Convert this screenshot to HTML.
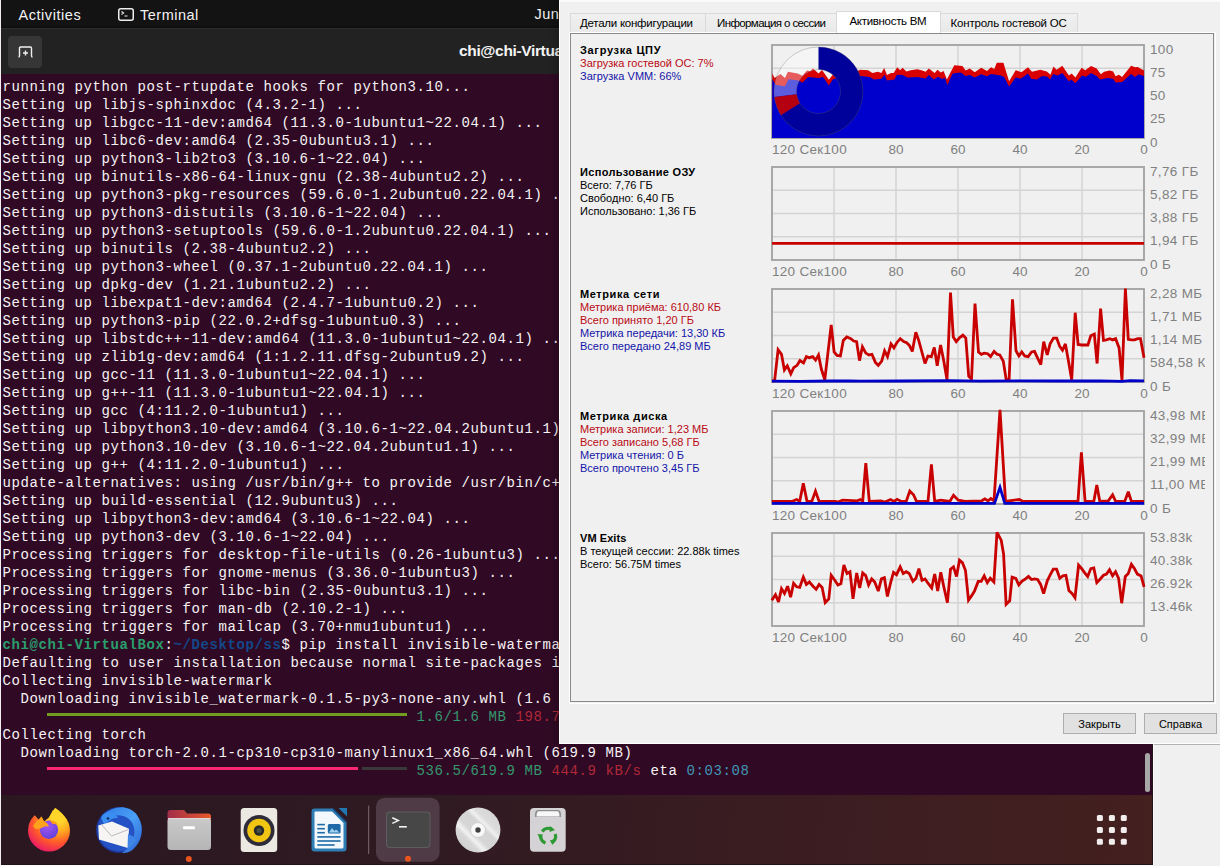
<!DOCTYPE html><html><head><meta charset="utf-8"><style>
*{margin:0;padding:0;box-sizing:border-box}
html,body{width:1220px;height:866px;overflow:hidden;background:#f0f0f0;font-family:"Liberation Sans",sans-serif}
#scr{position:absolute;left:0;top:0;width:1153px;height:865px;background:#300a24;overflow:hidden}
#lb{position:absolute;left:0;top:0;width:1px;height:865px;background:#f4eef2;z-index:5}
#topbar{position:absolute;left:0;top:0;width:1153px;height:28px;background:#131313;border-bottom:2px solid #0f0f0f;color:#f2f2f2;font-size:14.5px}
#hdr{position:absolute;left:0;top:28px;width:1153px;height:46px;background:#222222;border-top:1px solid #2d2d2d}
#term{position:absolute;left:0;top:74px;padding-top:4px;width:1153px;height:721px;background:#300a24;font-family:"Liberation Mono",monospace;font-size:14px;letter-spacing:0.6px;color:#f6f2f4}
.tl{position:relative;height:18px;line-height:18px;white-space:pre;padding-left:2.4px}
.pg{color:#2a9e6c;font-weight:bold}
.pb{color:#12488b;font-weight:bold}
.cg{color:#35986f}.cr{color:#b02838}.cc{color:#4096b6}
.bar{display:inline-block;position:relative;width:360px;height:18px;vertical-align:top}
.bar i{position:absolute;top:5px;height:3px}
.bg1{background:#729c1f}.bp{background:#f92672}.bk{background:#3a3a3a}
#dock{position:absolute;left:0;top:795px;width:1153px;height:70px;background:linear-gradient(95deg,#2a1720 0%,#2f1a22 35%,#3b1d21 70%,#44201f 100%)}
#dlg{position:absolute;left:559px;top:0;width:661px;height:744px;background:#f0f0f0;border-left:1px solid #fff;border-top:2px solid #fafafa;border-bottom:1px solid #fff}
.abs{position:absolute}
.tab{position:absolute;top:13px;height:20px;border:1px solid #d9d9d9;border-bottom:none;background:linear-gradient(#f0f0f0,#e9e9e9);font-size:11.5px;color:#000;line-height:18px;white-space:nowrap}
.lbl{position:absolute;left:580px;font-size:11px;line-height:13px;white-space:nowrap}
.lbl b{font-size:11px}
.red{color:#b90a14}.blue{color:#1414a8}
.ax{position:absolute;font-size:13.5px;color:#808080;white-space:nowrap;line-height:13px}
.btn{position:absolute;top:713px;height:21px;width:73px;border:1px solid #adadad;background:#e1e1e1;font-size:11px;text-align:center;line-height:21px;color:#000}
</style></head><body>
<div id="scr">
<div id="topbar"><span class="abs" style="left:18.5px;top:6.5px;letter-spacing:0.55px">Activities</span><svg class="abs" style="left:118px;top:7.5px" width="16" height="13" viewBox="0 0 16 13"><rect x="0.75" y="0.75" width="14.5" height="11.5" rx="2" fill="none" stroke="#eee" stroke-width="1.5"/><path d="M3.5 3.5l2 1.5-2 1.5M6.5 8h3" stroke="#eee" stroke-width="1.2" fill="none"/></svg><span class="abs" style="left:140px;top:6.5px;letter-spacing:0.5px">Terminal</span><span class="abs" style="left:534.5px;top:6px;letter-spacing:0.5px">Jun</span></div>
<div id="hdr"><div class="abs" style="left:8px;top:7px;width:34px;height:32px;border-radius:4px;background:#363636"></div><svg class="abs" style="left:17px;top:17px" width="17" height="12" viewBox="0 0 17 12"><path d="M1.5 11 Q2.5 11 2.5 9.5 V2 Q2.5 1 3.5 1 H13.5 Q14.5 1 14.5 2 V9.5 Q14.5 11 15.5 11" fill="none" stroke="#f0f0f0" stroke-width="1.4"/><path d="M8.5 4.5v5M6 7h5" stroke="#f0f0f0" stroke-width="1.4"/></svg><span class="abs" style="left:459px;top:12.5px;font-weight:bold;font-size:15.5px;letter-spacing:-0.35px;color:#f4f4f4">chi@chi-VirtualBox: ~/Desktop/ss</span></div>
<div id="term"><div class="tl">running python post-rtupdate hooks for python3.10...</div>
<div class="tl">Setting up libjs-sphinxdoc (4.3.2-1) ...</div>
<div class="tl">Setting up libgcc-11-dev:amd64 (11.3.0-1ubuntu1~22.04.1) ...</div>
<div class="tl">Setting up libc6-dev:amd64 (2.35-0ubuntu3.1) ...</div>
<div class="tl">Setting up python3-lib2to3 (3.10.6-1~22.04) ...</div>
<div class="tl">Setting up binutils-x86-64-linux-gnu (2.38-4ubuntu2.2) ...</div>
<div class="tl">Setting up python3-pkg-resources (59.6.0-1.2ubuntu0.22.04.1) ...</div>
<div class="tl">Setting up python3-distutils (3.10.6-1~22.04) ...</div>
<div class="tl">Setting up python3-setuptools (59.6.0-1.2ubuntu0.22.04.1) ...</div>
<div class="tl">Setting up binutils (2.38-4ubuntu2.2) ...</div>
<div class="tl">Setting up python3-wheel (0.37.1-2ubuntu0.22.04.1) ...</div>
<div class="tl">Setting up dpkg-dev (1.21.1ubuntu2.2) ...</div>
<div class="tl">Setting up libexpat1-dev:amd64 (2.4.7-1ubuntu0.2) ...</div>
<div class="tl">Setting up python3-pip (22.0.2+dfsg-1ubuntu0.3) ...</div>
<div class="tl">Setting up libstdc++-11-dev:amd64 (11.3.0-1ubuntu1~22.04.1) ...</div>
<div class="tl">Setting up zlib1g-dev:amd64 (1:1.2.11.dfsg-2ubuntu9.2) ...</div>
<div class="tl">Setting up gcc-11 (11.3.0-1ubuntu1~22.04.1) ...</div>
<div class="tl">Setting up g++-11 (11.3.0-1ubuntu1~22.04.1) ...</div>
<div class="tl">Setting up gcc (4:11.2.0-1ubuntu1) ...</div>
<div class="tl">Setting up libpython3.10-dev:amd64 (3.10.6-1~22.04.2ubuntu1.1) ...</div>
<div class="tl">Setting up python3.10-dev (3.10.6-1~22.04.2ubuntu1.1) ...</div>
<div class="tl">Setting up g++ (4:11.2.0-1ubuntu1) ...</div>
<div class="tl">update-alternatives: using /usr/bin/g++ to provide /usr/bin/c++ (c++) in auto mode</div>
<div class="tl">Setting up build-essential (12.9ubuntu3) ...</div>
<div class="tl">Setting up libpython3-dev:amd64 (3.10.6-1~22.04) ...</div>
<div class="tl">Setting up python3-dev (3.10.6-1~22.04) ...</div>
<div class="tl">Processing triggers for desktop-file-utils (0.26-1ubuntu3) ...</div>
<div class="tl">Processing triggers for gnome-menus (3.36.0-1ubuntu3) ...</div>
<div class="tl">Processing triggers for libc-bin (2.35-0ubuntu3.1) ...</div>
<div class="tl">Processing triggers for man-db (2.10.2-1) ...</div>
<div class="tl">Processing triggers for mailcap (3.70+nmu1ubuntu1) ...</div>
<div class="tl"><b class="pg">chi@chi-VirtualBox</b>:<b class="pb">~/Desktop/ss</b>$ pip install invisible-watermark</div>
<div class="tl">Defaulting to user installation because normal site-packages is not writeable</div>
<div class="tl">Collecting invisible-watermark</div>
<div class="tl">  Downloading invisible_watermark-0.1.5-py3-none-any.whl (1.6 MB)</div>
<div class="tl">     <span class="bar"><i class="bg1" style="left:0;width:360px"></i></span> <span class="cg">1.6/1.6 MB</span> <span class="cr">198.7 kB/s</span> eta <span class="cc">0:00:00</span></div>
<div class="tl">Collecting torch</div>
<div class="tl">  Downloading torch-2.0.1-cp310-cp310-manylinux1_x86_64.whl (619.9 MB)</div>
<div class="tl">     <span class="bar"><i class="bp" style="left:0;width:311px"></i><i class="bk" style="left:314.5px;width:45.5px"></i></span> <span class="cg">536.5/619.9 MB</span> <span class="cr">444.9 kB/s</span> eta <span class="cc">0:03:08</span></div><div class="abs" style="left:1144.5px;top:678.7px;width:5px;height:39px;border-radius:3px;background:#a7a7a7"></div></div>
<div id="dock"><svg class="abs" style="left:0;top:0" width="1153" height="70" viewBox="0 795 1153 70">
<defs>
<radialGradient id="ffg" cx="0.7" cy="0.2" r="0.9"><stop offset="0" stop-color="#ffe83a"/><stop offset="0.35" stop-color="#ffb21e"/><stop offset="0.65" stop-color="#ff5a2a"/><stop offset="1" stop-color="#e8116e"/></radialGradient>
<radialGradient id="ffp" cx="0.4" cy="0.3" r="0.8"><stop offset="0" stop-color="#a455f0"/><stop offset="1" stop-color="#5b3fd8"/></radialGradient>
<linearGradient id="tbg" x1="0" y1="0" x2="1" y2="1"><stop offset="0" stop-color="#1d86e8"/><stop offset="0.5" stop-color="#2a6ad8"/><stop offset="1" stop-color="#1b3f9a"/></linearGradient>
<linearGradient id="fldt" x1="0" y1="0" x2="1" y2="0"><stop offset="0" stop-color="#a12d48"/><stop offset="1" stop-color="#e85a2c"/></linearGradient>
<linearGradient id="fldf" x1="0" y1="0" x2="0" y2="1"><stop offset="0" stop-color="#c9c9c9"/><stop offset="1" stop-color="#b5b5b5"/></linearGradient>
<linearGradient id="cdg" x1="1" y1="0" x2="0" y2="1"><stop offset="0" stop-color="#d0d0d0"/><stop offset="0.3" stop-color="#dcdcdc"/><stop offset="0.36" stop-color="#f0f0f0"/><stop offset="0.42" stop-color="#d4d4d4"/><stop offset="0.58" stop-color="#d6d6d6"/><stop offset="0.66" stop-color="#f2f2f2"/><stop offset="0.72" stop-color="#d8d8d8"/><stop offset="1" stop-color="#c8c8c8"/></linearGradient>
<linearGradient id="tbw" x1="0" y1="0" x2="1" y2="1"><stop offset="0" stop-color="#2f7ee8"/><stop offset="0.5" stop-color="#4a9ef4"/><stop offset="1" stop-color="#2a62d4"/></linearGradient>
</defs>
<!-- firefox -->
<circle cx="49" cy="830.5" r="21" fill="url(#ffg)"/>
<polygon points="30,812 35,815.5 38.5,819.5 41.5,816.5 44,821.5 49.2,817.3 54.5,807 54.5,800 30,800" fill="#2a1720"/>
<path d="M49.2 817.3 L55 807.8 Q62 812 67 820 L60 824 Z" fill="#ffd52a"/>
<circle cx="49" cy="829.8" r="9.2" fill="url(#ffp)"/>
<path d="M33 826 Q36 821 39.5 819.5 L41.5 816.5 L44 821.5 Q47.5 822.5 49 826.5 Q45 825.5 42.5 827.5 Q39 829.5 35.5 829 Z" fill="#ffa21c"/>
<path d="M50 820.8 Q55.5 820 58 825 Q55 823.5 52.5 824 Z" fill="#ff9a1f"/>
<!-- thunderbird -->
<circle cx="119" cy="830" r="23" fill="#1d3596"/>
<circle cx="119" cy="830" r="21.5" fill="#2452c4"/>
<path d="M103 815 Q112 806.5 123 807.3 Q138 809 141.5 826 Q143 842 131 851 Q127 853.5 122 853 Q134 845 134.5 832 Q134 818 121 815.5 Q111 814 105 822 Z" fill="url(#tbw)"/>
<path d="M101 818 Q103 812 110 812.5 Q116 813.5 118 818 Q112 817.5 108 822 L104 824 Z" fill="#3a8ef2"/>
<circle cx="108" cy="818.5" r="1.3" fill="#102a6a"/>
<polygon points="98.3,825.5 112,821.5 129,828.8 128,848 99,839.5" fill="#f7f5f3"/>
<polyline points="101.5,824.5 111.5,836 128.5,829.5" fill="none" stroke="#b0a8b0" stroke-width="0.8"/>
<path d="M128 834 Q134 836 136 840 Q133 847 127.5 848 Z" fill="#3f86e6"/>
<!-- files -->
<path d="M167.5 813 Q167.5 810 170.5 810 L184 810 L187 813.5 L208 813.5 Q211 813.5 211 816.5 L211 822 L167.5 822 Z" fill="url(#fldt)"/>
<rect x="167.5" y="818" width="43.5" height="32" rx="3.5" fill="url(#fldf)"/>
<rect x="168" y="818" width="42.5" height="1.2" fill="#e0d6da"/>
<rect x="183" y="826.2" width="12" height="3" rx="1.2" fill="#ffffff"/>
<circle cx="188.8" cy="859" r="3" fill="#e9541f"/>
<!-- rhythmbox -->
<rect x="240.7" y="808" width="36.5" height="44" rx="3.5" fill="#ece8e2"/>
<circle cx="259" cy="830.5" r="15.5" fill="#2e2c3a"/>
<circle cx="259" cy="830.5" r="11.8" fill="#f2c512"/>
<circle cx="259" cy="830.5" r="5.2" fill="#2a2a2a"/>
<circle cx="259" cy="830.5" r="2.5" fill="#485048"/>
<!-- writer -->
<path d="M314.5 808.5 L333 808.5 L346.5 822 L346.5 848.5 Q346.5 851.5 343.5 851.5 L314.5 851.5 Q311.5 851.5 311.5 848.5 L311.5 811.5 Q311.5 808.5 314.5 808.5 Z" fill="#2f7db5"/>
<path d="M315.5 811.5 L332 811.5 L343.5 823 L343.5 847 Q343.5 848.5 342 848.5 L316 848.5 Q314.5 848.5 314.5 847 L314.5 812.5 Q314.5 811.5 315.5 811.5 Z" fill="#f2f8fc"/>
<path d="M333 808.5 L346.5 822" stroke="#173f6a" stroke-width="1.6"/>
<path d="M338.5 808 L347 808 L347 816.5 Z" fill="#2276b0"/>
<g fill="#1f6aa6"><rect x="317.3" y="823.8" width="7.6" height="1.6"/><rect x="317.3" y="827.9" width="7.6" height="1.6"/><rect x="317.3" y="831.9" width="7.6" height="1.6"/>
<rect x="317.3" y="836.1" width="23.3" height="1.6"/><rect x="317.3" y="840.2" width="23.3" height="1.6"/><rect x="317.3" y="844.2" width="17.3" height="1.6"/></g>
<rect x="327.8" y="824" width="12.8" height="9.6" rx="1.5" fill="#1f6aa6"/>
<path d="M329 832.5 L332 828 L334.5 831 L336 829.5 L339.5 832.5 Z" fill="#9fd0f0"/>
<!-- separator -->
<rect x="368.2" y="805.6" width="1" height="48.5" fill="#7e6a74"/>
<!-- terminal highlight -->
<rect x="376" y="797.7" width="63.6" height="64" rx="9" fill="#4f3b46"/>
<rect x="386" y="811.5" width="44.5" height="36.5" rx="4" fill="#5d5d5d"/>
<rect x="387" y="812.5" width="42.5" height="34.5" rx="3.5" fill="#474747"/>
<path d="M392.3 817.8 L398.3 820.6 L392.3 823.4" fill="none" stroke="#f4f4f4" stroke-width="1.5"/>
<rect x="399" y="826" width="7.8" height="1.6" fill="#f4f4f4"/>
<circle cx="408" cy="858.8" r="3" fill="#e9541f"/>
<!-- cd -->
<circle cx="478" cy="830" r="22.4" fill="url(#cdg)"/>
<circle cx="478" cy="830" r="7.6" fill="#f8f8f8"/>
<circle cx="478" cy="830" r="7.4" fill="none" stroke="#bdbdbd" stroke-width="0.6"/>
<circle cx="478" cy="830" r="2.7" fill="#404040"/>
<!-- trash -->
<rect x="530" y="808" width="35.7" height="43.8" rx="4" fill="#d4d2d4"/>
<path d="M535 817 Q534.5 810 538 810 L558 810 Q561.5 810 561 817 Z" fill="#8e8e8e"/>
<path d="M536.5 816.5 Q536.5 811.2 539 811.2 L557 811.2 Q559.5 811.2 559.5 816.5 Z" fill="#f8f8f8"/>
<g fill="none" stroke="#2e9a34" stroke-width="3.2">
<path d="M542.2 831.5 A7.2 7.2 0 0 1 551.5 829.2"/>
<path d="M555.2 834 A7.2 7.2 0 0 1 551.5 843"/>
<path d="M545.5 843 A7.2 7.2 0 0 1 540.8 836"/>
</g>
<g fill="#2e9a34">
<polygon points="550,826 555,830 549.5,832"/>
<polygon points="556.5,838.5 552.8,844.8 549.8,840.5"/>
<polygon points="540.5,840.5 537.5,834 543,834.5"/>
</g>
<!-- app grid -->
<g fill="#f2eeee">
<rect x="1096.9" y="815" width="6" height="6" rx="1.5"/><rect x="1108.9" y="815" width="6" height="6" rx="1.5"/><rect x="1120.8" y="815" width="6" height="6" rx="1.5"/>
<rect x="1096.9" y="827" width="6" height="6" rx="1.5"/><rect x="1108.9" y="827" width="6" height="6" rx="1.5"/><rect x="1120.8" y="827" width="6" height="6" rx="1.5"/>
<rect x="1096.9" y="838.8" width="6" height="6" rx="1.5"/><rect x="1108.9" y="838.8" width="6" height="6" rx="1.5"/><rect x="1120.8" y="838.8" width="6" height="6" rx="1.5"/>
</g>
</svg></div>
<div id="lb"></div></div>
<div class="abs" style="left:1152px;top:0;width:1px;height:865px;background:#22141a"></div>
<div class="abs" style="left:0;top:864px;width:1153px;height:1px;background:#22141a"></div>
<div class="abs" style="left:1153px;top:0;width:1px;height:866px;background:#fbf8f9"></div>
<div class="abs" style="left:0;top:865px;width:1154px;height:1px;background:#fbf8f9"></div>
<div class="abs" style="left:1154px;top:744px;width:66px;height:1px;background:#b4b4b4"></div>
<div class="abs" style="left:547px;top:0;width:12px;height:744px;background:linear-gradient(90deg,rgba(0,0,0,0),rgba(0,0,0,0.15))"></div>
<div id="dlg"></div>
<div class="tab" style="left:570px;width:136px;padding-left:9px;line-height:19px;letter-spacing:-0.25px">Детали конфигурации</div>
<div class="tab" style="left:705px;width:132px;padding-left:11px;line-height:19px;letter-spacing:-0.6px">Информация о сессии</div>
<div class="tab" style="left:836px;top:11px;height:22px;width:105px;background:#fff;z-index:2;padding-left:12.5px;line-height:19px;letter-spacing:-0.31px">Активность ВМ</div>
<div class="tab" style="left:940px;width:138px;padding-left:9.5px;line-height:19px;letter-spacing:-0.19px">Контроль гостевой ОС</div>
<div class="abs" style="left:569px;top:32px;width:647px;height:672px;border:1px solid #fff"></div>
<div class="abs" style="left:570px;top:33px;width:644px;height:669px;border:1px solid #8a8a8a"></div>
<div class="lbl" style="top:44.0px"><b style="letter-spacing:0.68px">Загрузка ЦПУ</b></div>
<div class="lbl red" style="top:57.1px">Загрузка гостевой ОС: 7%</div>
<div class="lbl blue" style="top:70.2px">Загрузка VMM: 66%</div>
<svg class="abs" style="left:770px;top:43px" width="376" height="97" viewBox="770 43 376 97"><line x1="834.0" y1="45" x2="834.0" y2="138" stroke="#d4d4d4" stroke-width="1.5"/><line x1="896.0" y1="45" x2="896.0" y2="138" stroke="#d4d4d4" stroke-width="1.5"/><line x1="958.0" y1="45" x2="958.0" y2="138" stroke="#d4d4d4" stroke-width="1.5"/><line x1="1020.0" y1="45" x2="1020.0" y2="138" stroke="#d4d4d4" stroke-width="1.5"/><line x1="1082.0" y1="45" x2="1082.0" y2="138" stroke="#d4d4d4" stroke-width="1.5"/><line x1="772" y1="68.2" x2="1144" y2="68.2" stroke="#d4d4d4" stroke-width="1.5"/><line x1="772" y1="91.5" x2="1144" y2="91.5" stroke="#d4d4d4" stroke-width="1.5"/><line x1="772" y1="114.8" x2="1144" y2="114.8" stroke="#d4d4d4" stroke-width="1.5"/><rect x="772" y="45" width="372" height="93" fill="none" stroke="#a0a0a0" stroke-width="1.8"/><polygon points="772.3,73.5 774.6,78.1 780.4,74.1 785.0,78.1 787.9,71.8 797.7,73.5 802.3,75.8 807.0,70.6 810.4,71.2 812.7,68.3 818.5,73.5 822.0,70.0 828.9,79.8 832.9,74.6 840.0,71.0 848.0,70.5 858.9,70.6 860.0,69.8 868.2,70.2 872.3,73.0 878.0,71.8 881.3,73.0 884.2,68.1 887.0,75.1 891.1,73.0 893.6,73.0 897.3,67.3 900.2,70.2 902.6,67.7 906.3,71.4 910.8,70.2 917.4,69.3 922.3,70.6 925.6,71.8 928.9,68.5 934.6,73.0 937.5,69.8 940.7,72.6 943.6,71.0 946.9,79.6 950.2,73.0 954.3,65.2 962.4,66.1 965.7,70.6 969.8,68.5 974.7,72.2 981.2,67.7 987.0,71.0 991.1,67.3 994.3,68.9 996.8,62.8 1003.4,62.8 1009.1,81.2 1015.7,70.2 1021.4,72.2 1028.0,67.3 1032.0,71.8 1040.2,69.8 1046.8,71.4 1050.5,74.7 1053.4,66.5 1056.6,69.8 1062.3,65.7 1068.9,75.5 1071.7,73.4 1075.4,77.5 1081.6,67.7 1085.2,70.2 1091.0,66.1 1096.7,68.5 1100.8,74.3 1104.1,71.8 1109.8,70.6 1113.1,71.4 1115.6,76.3 1118.9,74.7 1122.1,77.1 1131.1,65.7 1135.2,67.3 1137.7,66.9 1144.0,70.6 1144,138 772,138" fill="#d80000"/><polygon points="772.3,79.3 775.8,85.0 785.0,86.2 788.5,79.3 798.9,80.4 802.3,82.7 808.1,77.0 818.5,78.1 823.1,77.0 828.9,85.6 832.9,79.3 840.0,77.0 848.0,76.5 858.9,77.5 860.0,75.9 869.8,77.1 874.0,79.6 881.3,78.8 884.6,74.7 887.0,80.4 894.4,79.6 896.9,74.7 902.6,75.1 907.5,77.5 917.4,77.1 925.6,78.4 928.9,75.1 933.8,79.6 937.9,76.7 942.0,78.8 945.2,78.0 947.3,85.3 952.6,73.4 960.7,72.6 965.7,75.9 969.8,75.1 974.7,77.5 981.2,74.3 987.0,76.3 991.1,73.9 1000.9,75.5 1004.2,77.1 1009.1,86.6 1015.7,77.5 1020.6,78.8 1028.0,73.4 1031.2,78.8 1037.0,79.6 1041.9,75.9 1047.6,76.7 1050.1,79.6 1053.3,73.9 1057.4,75.5 1062.3,73.0 1068.9,81.2 1071.3,79.6 1075.4,83.3 1082.0,75.5 1086.1,76.7 1091.0,73.0 1096.7,75.9 1100.0,79.6 1107.4,78.0 1113.1,78.8 1115.6,82.5 1122.1,82.0 1131.1,73.9 1135.2,77.1 1138.5,74.3 1144.0,75.9 1144,138 772,138" fill="#0000cc"/><path d="M774.35,97.08 A44.5,44.5 0 0 1 818.50,47.00 L818.50,69.50 A22,22 0 0 0 796.67,94.26 Z" fill="rgba(255,255,255,0.36)"/><path d="M818.50,47.00 A44.5,44.5 0 1 1 780.93,115.34 L799.92,103.29 A22,22 0 1 0 818.50,69.50 Z" fill="#00009a"/><path d="M780.93,115.34 A44.5,44.5 0 0 1 774.35,97.08 L796.67,94.26 A22,22 0 0 0 799.92,103.29 Z" fill="rgba(195,0,0,0.92)"/><circle cx="818.5" cy="91.5" r="44.5" fill="none" stroke="rgba(100,100,100,0.3)" stroke-width="1"/><circle cx="818.5" cy="91.5" r="22" fill="none" stroke="rgba(100,100,100,0.3)" stroke-width="1"/></svg>
<div class="ax" style="left:1150px;top:42.5px;width:55px;overflow:hidden;letter-spacing:0.35px">100</div>
<div class="ax" style="left:1150px;top:65.8px;width:55px;overflow:hidden;letter-spacing:0.35px">75</div>
<div class="ax" style="left:1150px;top:89.0px;width:55px;overflow:hidden;letter-spacing:0.35px">50</div>
<div class="ax" style="left:1150px;top:112.2px;width:55px;overflow:hidden;letter-spacing:0.35px">25</div>
<div class="ax" style="left:1150px;top:135.5px;width:55px;overflow:hidden;letter-spacing:0.35px">0</div>
<div class="ax" style="left:772px;top:143px;letter-spacing:0.3px">120 Сек100</div>
<div class="ax" style="left:876.0px;top:143px;width:40px;text-align:center">80</div>
<div class="ax" style="left:938.0px;top:143px;width:40px;text-align:center">60</div>
<div class="ax" style="left:1000.0px;top:143px;width:40px;text-align:center">40</div>
<div class="ax" style="left:1062.0px;top:143px;width:40px;text-align:center">20</div>
<div class="ax" style="left:1124.0px;top:143px;width:40px;text-align:center">0</div>
<div class="lbl" style="top:166.0px"><b style="letter-spacing:0.32px">Использование ОЗУ</b></div>
<div class="lbl " style="top:179.1px">Всего: 7,76 ГБ</div>
<div class="lbl " style="top:192.2px">Свободно: 6,40 ГБ</div>
<div class="lbl " style="top:205.3px">Использовано: 1,36 ГБ</div>
<svg class="abs" style="left:770px;top:165px" width="376" height="97" viewBox="770 165 376 97"><line x1="834.0" y1="167" x2="834.0" y2="260" stroke="#d4d4d4" stroke-width="1.5"/><line x1="896.0" y1="167" x2="896.0" y2="260" stroke="#d4d4d4" stroke-width="1.5"/><line x1="958.0" y1="167" x2="958.0" y2="260" stroke="#d4d4d4" stroke-width="1.5"/><line x1="1020.0" y1="167" x2="1020.0" y2="260" stroke="#d4d4d4" stroke-width="1.5"/><line x1="1082.0" y1="167" x2="1082.0" y2="260" stroke="#d4d4d4" stroke-width="1.5"/><line x1="772" y1="190.2" x2="1144" y2="190.2" stroke="#d4d4d4" stroke-width="1.5"/><line x1="772" y1="213.5" x2="1144" y2="213.5" stroke="#d4d4d4" stroke-width="1.5"/><line x1="772" y1="236.8" x2="1144" y2="236.8" stroke="#d4d4d4" stroke-width="1.5"/><rect x="772" y="167" width="372" height="93" fill="none" stroke="#a0a0a0" stroke-width="1.8"/><line x1="772" y1="243.4" x2="1144" y2="243.4" stroke="#c80000" stroke-width="2.6"/></svg>
<div class="ax" style="left:1150px;top:164.5px;width:55px;overflow:hidden;letter-spacing:0.35px">7,76 ГБ</div>
<div class="ax" style="left:1150px;top:187.8px;width:55px;overflow:hidden;letter-spacing:0.35px">5,82 ГБ</div>
<div class="ax" style="left:1150px;top:211.0px;width:55px;overflow:hidden;letter-spacing:0.35px">3,88 ГБ</div>
<div class="ax" style="left:1150px;top:234.2px;width:55px;overflow:hidden;letter-spacing:0.35px">1,94 ГБ</div>
<div class="ax" style="left:1150px;top:257.5px;width:55px;overflow:hidden;letter-spacing:0.35px">0 Б</div>
<div class="ax" style="left:772px;top:265px;letter-spacing:0.3px">120 Сек100</div>
<div class="ax" style="left:876.0px;top:265px;width:40px;text-align:center">80</div>
<div class="ax" style="left:938.0px;top:265px;width:40px;text-align:center">60</div>
<div class="ax" style="left:1000.0px;top:265px;width:40px;text-align:center">40</div>
<div class="ax" style="left:1062.0px;top:265px;width:40px;text-align:center">20</div>
<div class="ax" style="left:1124.0px;top:265px;width:40px;text-align:center">0</div>
<div class="lbl" style="top:288.0px"><b style="letter-spacing:0.59px">Метрика сети</b></div>
<div class="lbl red" style="top:301.1px">Метрика приёма: 610,80 КБ</div>
<div class="lbl red" style="top:314.2px">Всего принято 1,20 ГБ</div>
<div class="lbl blue" style="top:327.3px">Метрика передачи: 13,30 КБ</div>
<div class="lbl blue" style="top:340.4px">Всего передано 24,89 МБ</div>
<svg class="abs" style="left:770px;top:287px" width="376" height="97" viewBox="770 287 376 97"><line x1="834.0" y1="289" x2="834.0" y2="382" stroke="#d4d4d4" stroke-width="1.5"/><line x1="896.0" y1="289" x2="896.0" y2="382" stroke="#d4d4d4" stroke-width="1.5"/><line x1="958.0" y1="289" x2="958.0" y2="382" stroke="#d4d4d4" stroke-width="1.5"/><line x1="1020.0" y1="289" x2="1020.0" y2="382" stroke="#d4d4d4" stroke-width="1.5"/><line x1="1082.0" y1="289" x2="1082.0" y2="382" stroke="#d4d4d4" stroke-width="1.5"/><line x1="772" y1="312.2" x2="1144" y2="312.2" stroke="#d4d4d4" stroke-width="1.5"/><line x1="772" y1="335.5" x2="1144" y2="335.5" stroke="#d4d4d4" stroke-width="1.5"/><line x1="772" y1="358.8" x2="1144" y2="358.8" stroke="#d4d4d4" stroke-width="1.5"/><rect x="772" y="289" width="372" height="93" fill="none" stroke="#a0a0a0" stroke-width="1.8"/><polyline points="772.0,381.0 774.6,380.8 778.1,349.7 781.5,354.3 784.4,369.9 787.3,365.8 790.8,373.9 793.7,367.6 797.1,365.3 800.0,360.6 803.5,363.0 806.4,356.6 809.3,357.7 812.7,356.6 815.6,360.1 818.5,354.9 821.4,369.3 824.8,379.7 831.2,324.8 834.1,352.0 837.0,355.4 840.4,356.0 843.3,340.4 846.8,337.0 850.8,338.7 853.7,341.0 856.6,341.6 859.5,360.6 862.4,346.8 865.8,353.1 869.0,354.9 871.9,354.3 875.4,362.4 878.3,365.3 881.7,361.2 884.6,350.8 887.5,356.6 891.0,343.9 893.9,347.9 896.8,342.7 900.2,338.7 903.7,341.6 906.6,342.7 909.5,345.6 912.3,351.4 915.8,332.3 918.7,340.4 922.2,353.1 925.0,363.5 927.9,356.0 931.4,356.6 934.3,347.4 937.2,365.8 940.6,345.0 943.5,359.5 947.0,379.7 950.5,292.5 953.3,337.0 956.2,341.6 959.7,337.5 962.9,335.2 965.8,338.1 968.7,376.2 971.5,379.1 975.0,303.5 978.5,352.0 981.4,354.3 984.2,353.1 987.7,353.7 990.6,356.6 994.1,351.4 997.0,354.3 999.8,354.9 1003.3,361.2 1006.2,379.7 1009.1,379.7 1012.5,299.4 1016.0,350.8 1018.9,356.0 1021.8,352.0 1024.7,356.0 1028.1,356.6 1031.6,352.0 1034.5,351.4 1037.4,357.7 1040.8,364.7 1043.7,341.6 1047.2,354.9 1050.1,343.9 1053.5,338.1 1056.7,338.1 1059.6,346.2 1062.5,350.2 1065.4,343.9 1068.9,363.5 1071.7,379.7 1075.2,312.7 1078.1,344.5 1081.6,345.0 1085.0,345.0 1087.9,345.0 1090.8,335.8 1094.3,334.1 1097.1,363.5 1100.6,308.7 1103.5,340.4 1106.4,339.9 1109.8,338.7 1112.7,339.9 1115.6,338.7 1119.1,347.9 1122.0,380.3 1125.4,288.5 1128.3,339.3 1131.2,339.9 1134.7,339.9 1137.6,338.7 1140.5,338.7 1144.0,357.7" fill="none" stroke="#c80000" stroke-width="2.8" stroke-linejoin="miter" stroke-miterlimit="3"/><polyline points="772.0,381.2 800.0,381.3 830.0,381.0 850.0,380.8 860.0,381.2 900.0,381.0 950.0,380.7 980.0,381.2 1020.0,380.9 1060.0,381.0 1100.0,380.8 1122.0,381.3 1130.0,380.6 1144.0,380.8" fill="none" stroke="#0000c8" stroke-width="2.8"/></svg>
<div class="ax" style="left:1150px;top:286.5px;width:55px;overflow:hidden;letter-spacing:0.35px">2,28 МБ</div>
<div class="ax" style="left:1150px;top:309.8px;width:55px;overflow:hidden;letter-spacing:0.35px">1,71 МБ</div>
<div class="ax" style="left:1150px;top:333.0px;width:55px;overflow:hidden;letter-spacing:0.35px">1,14 МБ</div>
<div class="ax" style="left:1150px;top:356.2px;width:55px;overflow:hidden;letter-spacing:0.35px">584,58 КБ</div>
<div class="ax" style="left:1150px;top:379.5px;width:55px;overflow:hidden;letter-spacing:0.35px">0 Б</div>
<div class="ax" style="left:772px;top:387px;letter-spacing:0.3px">120 Сек100</div>
<div class="ax" style="left:876.0px;top:387px;width:40px;text-align:center">80</div>
<div class="ax" style="left:938.0px;top:387px;width:40px;text-align:center">60</div>
<div class="ax" style="left:1000.0px;top:387px;width:40px;text-align:center">40</div>
<div class="ax" style="left:1062.0px;top:387px;width:40px;text-align:center">20</div>
<div class="ax" style="left:1124.0px;top:387px;width:40px;text-align:center">0</div>
<div class="lbl" style="top:410.0px"><b style="letter-spacing:0.58px">Метрика диска</b></div>
<div class="lbl red" style="top:423.1px">Метрика записи: 1,23 МБ</div>
<div class="lbl red" style="top:436.2px">Всего записано 5,68 ГБ</div>
<div class="lbl blue" style="top:449.3px">Метрика чтения: 0 Б</div>
<div class="lbl blue" style="top:462.4px">Всего прочтено 3,45 ГБ</div>
<svg class="abs" style="left:770px;top:409px" width="376" height="97" viewBox="770 409 376 97"><line x1="834.0" y1="411" x2="834.0" y2="504" stroke="#d4d4d4" stroke-width="1.5"/><line x1="896.0" y1="411" x2="896.0" y2="504" stroke="#d4d4d4" stroke-width="1.5"/><line x1="958.0" y1="411" x2="958.0" y2="504" stroke="#d4d4d4" stroke-width="1.5"/><line x1="1020.0" y1="411" x2="1020.0" y2="504" stroke="#d4d4d4" stroke-width="1.5"/><line x1="1082.0" y1="411" x2="1082.0" y2="504" stroke="#d4d4d4" stroke-width="1.5"/><line x1="772" y1="434.2" x2="1144" y2="434.2" stroke="#d4d4d4" stroke-width="1.5"/><line x1="772" y1="457.5" x2="1144" y2="457.5" stroke="#d4d4d4" stroke-width="1.5"/><line x1="772" y1="480.8" x2="1144" y2="480.8" stroke="#d4d4d4" stroke-width="1.5"/><rect x="772" y="411" width="372" height="93" fill="none" stroke="#a0a0a0" stroke-width="1.8"/><polyline points="771.8,501.4 792.4,501.4 796.7,499.5 799.7,501.4 803.3,483.2 807.0,501.4 811.8,501.4 815.5,491.1 819.1,501.4 835.5,501.4 837.9,502.0 842.7,500.2 857.3,500.8 860.3,499.5 862.7,501.4 865.8,463.2 869.3,501.4 880.8,500.8 885.0,502.0 890.5,499.5 894.1,501.4 897.1,499.3 901.4,501.4 906.2,501.4 909.8,491.1 913.5,494.7 916.5,501.4 928.0,501.4 931.4,464.4 934.7,501.4 940.8,500.2 949.8,501.4 953.5,495.3 958.3,500.2 965.0,501.4 981.8,500.8 984.8,498.9 987.9,500.8 990.9,498.6 994.0,500.8 1000.0,409.8 1005.5,501.4 1019.4,499.5 1023.0,501.4 1078.0,501.4 1081.4,452.3 1085.1,501.4 1093.8,501.4 1096.8,485.0 1099.8,501.4 1108.3,500.8 1112.6,494.7 1115.6,501.4 1124.7,501.4 1128.3,491.7 1131.4,501.4 1144.0,501.4" fill="none" stroke="#c80000" stroke-width="2.8" stroke-linejoin="miter" stroke-miterlimit="3"/><polyline points="772.0,503.4 994.5,503.4 1000.0,487.4 1004.8,503.4 1144.0,503.4" fill="none" stroke="#0000c8" stroke-width="2.8"/></svg>
<div class="ax" style="left:1150px;top:408.5px;width:55px;overflow:hidden;letter-spacing:0.35px">43,98 МБ</div>
<div class="ax" style="left:1150px;top:431.8px;width:55px;overflow:hidden;letter-spacing:0.35px">32,99 МБ</div>
<div class="ax" style="left:1150px;top:455.0px;width:55px;overflow:hidden;letter-spacing:0.35px">21,99 МБ</div>
<div class="ax" style="left:1150px;top:478.2px;width:55px;overflow:hidden;letter-spacing:0.35px">11,00 МБ</div>
<div class="ax" style="left:1150px;top:501.5px;width:55px;overflow:hidden;letter-spacing:0.35px">0 Б</div>
<div class="ax" style="left:772px;top:509px;letter-spacing:0.3px">120 Сек100</div>
<div class="ax" style="left:876.0px;top:509px;width:40px;text-align:center">80</div>
<div class="ax" style="left:938.0px;top:509px;width:40px;text-align:center">60</div>
<div class="ax" style="left:1000.0px;top:509px;width:40px;text-align:center">40</div>
<div class="ax" style="left:1062.0px;top:509px;width:40px;text-align:center">20</div>
<div class="ax" style="left:1124.0px;top:509px;width:40px;text-align:center">0</div>
<div class="lbl" style="top:532.0px"><b style="letter-spacing:0.06px">VM Exits</b></div>
<div class="lbl " style="top:545.1px">В текущей сессии: 22.88k times</div>
<div class="lbl " style="top:558.2px">Всего: 56.75M times</div>
<svg class="abs" style="left:770px;top:531px" width="376" height="97" viewBox="770 531 376 97"><line x1="834.0" y1="533" x2="834.0" y2="626" stroke="#d4d4d4" stroke-width="1.5"/><line x1="896.0" y1="533" x2="896.0" y2="626" stroke="#d4d4d4" stroke-width="1.5"/><line x1="958.0" y1="533" x2="958.0" y2="626" stroke="#d4d4d4" stroke-width="1.5"/><line x1="1020.0" y1="533" x2="1020.0" y2="626" stroke="#d4d4d4" stroke-width="1.5"/><line x1="1082.0" y1="533" x2="1082.0" y2="626" stroke="#d4d4d4" stroke-width="1.5"/><line x1="772" y1="556.2" x2="1144" y2="556.2" stroke="#d4d4d4" stroke-width="1.5"/><line x1="772" y1="579.5" x2="1144" y2="579.5" stroke="#d4d4d4" stroke-width="1.5"/><line x1="772" y1="602.8" x2="1144" y2="602.8" stroke="#d4d4d4" stroke-width="1.5"/><rect x="772" y="533" width="372" height="93" fill="none" stroke="#a0a0a0" stroke-width="1.8"/><polyline points="771.8,600.2 775.5,594.7 778.5,602.0 781.5,588.6 784.5,593.5 787.6,586.2 790.6,597.1 793.6,583.2 796.7,586.8 799.7,587.4 803.3,577.1 806.4,584.4 809.4,582.0 813.0,586.2 816.1,589.2 819.1,584.4 822.1,587.4 825.2,602.6 828.8,598.9 831.2,575.3 834.8,580.2 837.9,585.0 840.9,583.8 843.9,565.0 847.0,573.5 850.0,571.7 853.0,598.9 856.7,572.9 859.7,588.0 862.7,572.9 865.7,575.6 868.6,585.0 871.7,578.9 874.7,582.0 878.3,591.1 881.4,578.9 884.4,577.7 887.4,596.5 890.5,583.2 893.5,572.3 896.5,574.7 900.2,566.8 903.2,573.5 906.2,571.7 909.2,573.5 912.9,581.4 915.9,578.3 918.9,568.6 922.0,580.2 925.0,578.9 928.0,583.2 931.7,588.0 934.7,574.1 937.7,591.1 940.8,572.3 943.8,586.8 947.4,602.6 950.5,569.2 953.5,566.8 956.5,576.5 959.5,560.2 962.4,562.6 965.5,570.5 968.5,600.2 971.5,595.9 974.5,591.1 978.2,581.4 981.2,581.4 984.2,575.9 987.3,582.6 990.3,578.3 993.9,582.0 997.0,532.3 1001.2,540.2 1003.6,554.1 1006.1,604.4 1009.7,600.8 1012.1,577.1 1015.8,578.3 1018.8,585.0 1021.8,581.4 1025.5,578.9 1028.5,576.5 1031.5,579.5 1034.5,578.9 1037.6,579.5 1040.6,584.4 1043.6,593.5 1047.3,580.8 1050.3,574.7 1053.3,569.2 1056.6,569.2 1059.8,578.3 1062.9,575.9 1065.9,575.3 1068.9,590.5 1072.0,593.5 1075.0,597.7 1078.6,565.0 1081.7,568.6 1084.7,572.9 1087.7,576.5 1090.8,568.6 1093.8,568.0 1096.8,582.6 1099.8,579.5 1103.5,575.3 1106.5,574.1 1109.5,569.8 1112.6,575.9 1115.6,571.7 1118.6,578.3 1121.7,603.2 1125.3,576.5 1128.3,573.5 1131.4,564.4 1134.4,568.6 1137.4,574.1 1141.1,575.9 1144.1,586.8" fill="none" stroke="#c80000" stroke-width="2.8" stroke-linejoin="miter" stroke-miterlimit="3"/></svg>
<div class="ax" style="left:1150px;top:530.5px;width:55px;overflow:hidden;letter-spacing:0.35px">53.83k</div>
<div class="ax" style="left:1150px;top:553.8px;width:55px;overflow:hidden;letter-spacing:0.35px">40.38k</div>
<div class="ax" style="left:1150px;top:577.0px;width:55px;overflow:hidden;letter-spacing:0.35px">26.92k</div>
<div class="ax" style="left:1150px;top:600.2px;width:55px;overflow:hidden;letter-spacing:0.35px">13.46k</div>
<div class="ax" style="left:772px;top:631px;letter-spacing:0.3px">120 Сек100</div>
<div class="ax" style="left:876.0px;top:631px;width:40px;text-align:center">80</div>
<div class="ax" style="left:938.0px;top:631px;width:40px;text-align:center">60</div>
<div class="ax" style="left:1000.0px;top:631px;width:40px;text-align:center">40</div>
<div class="ax" style="left:1062.0px;top:631px;width:40px;text-align:center">20</div>
<div class="ax" style="left:1124.0px;top:631px;width:40px;text-align:center">0</div>
<div class="btn" style="left:1063px">Закрыть</div>
<div class="btn" style="left:1144px">Справка</div>
</body></html>
